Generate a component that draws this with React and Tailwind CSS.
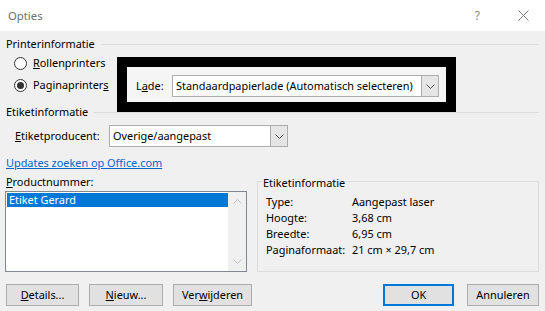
import React from "react";

function Radio({ checked }) {
  return (
    <span className="w-[13px] h-[13px] rounded-full border border-[#333333] bg-white flex items-center justify-center shrink-0">
      {checked && <span className="w-[7px] h-[7px] rounded-full bg-[#333333]" />}
    </span>
  );
}

function Chevron({ up, color = "#555555" }) {
  return (
    <svg width="9" height="5" viewBox="0 0 9 5" fill="none">
      <polyline
        points={up ? "0.5,4.5 4.5,0.5 8.5,4.5" : "0.5,0.5 4.5,4.5 8.5,0.5"}
        stroke={color}
        strokeWidth="1"
      />
    </svg>
  );
}

function Combo({ className, text }) {
  return (
    <div className={"flex h-[22px] border border-[#adadad] bg-white " + className}>
      <div className="flex-1 flex items-center pl-[3px] whitespace-nowrap overflow-hidden">{text}</div>
      <div className="w-[17px] bg-[#e5e5e5] border-l border-[#adadad] flex items-center justify-center">
        <Chevron />
      </div>
    </div>
  );
}

function GroupHeader({ children }) {
  return (
    <div className="flex items-center h-[16px]">
      <span className="whitespace-nowrap">{children}</span>
      <div className="flex-1 h-px bg-[#dcdcdc] ml-[6px]" />
    </div>
  );
}

function Btn({ className, children }) {
  return (
    <div
      className={
        "h-[22px] bg-[#e1e1e1] flex items-center justify-center whitespace-nowrap " + className
      }
    >
      {children}
    </div>
  );
}

export default function App() {
  return (
    <div className="w-[545px] h-[311px] bg-[#f0f0f0] font-['Noto_Sans',sans-serif] text-[10.9px] leading-[16px] text-black overflow-hidden">
      {/* Title bar */}
      <div className="h-[31px] bg-white flex items-center">
        <span className="ml-[8px] text-[11.3px] text-[#6f6f6f]">Opties</span>
        <span className="ml-auto text-[12px] text-[#8a8a8a] mr-[38px]">?</span>
        <svg width="11" height="11" viewBox="0 0 11 11" className="mr-[16px]">
          <line x1="0.5" y1="0.5" x2="10.5" y2="10.5" stroke="#7a7a7a" strokeWidth="1" />
          <line x1="10.5" y1="0.5" x2="0.5" y2="10.5" stroke="#7a7a7a" strokeWidth="1" />
        </svg>
      </div>

      <div className="px-[6px]">
        <div className="mt-[5px]">
          <GroupHeader>Printerinformatie</GroupHeader>
        </div>

        <div className="flex">
          <div className="w-[111px] pl-[8px]">
            <div className="h-[22px] flex items-center gap-[6px]">
              <Radio />
              <span>
                <span className="underline">R</span>ollenprinters
              </span>
            </div>
            <div className="h-[22px] flex items-center gap-[6px]">
              <Radio checked />
              <span>
                Paginaprinter<span className="underline">s</span>
              </span>
            </div>
          </div>
          <div className="relative z-10 mt-[5px] h-[55px] w-[339px] border-[10px] border-black bg-[#f5f5f5] flex items-start pt-[8px] pl-[9px]">
            <span className="h-[22px] leading-[22px] w-[36px] shrink-0">
              L<span className="underline">a</span>de:
            </span>
            <Combo className="w-[267px]" text="Standaardpapierlade (Automatisch selecteren)" />
          </div>
        </div>

        <div className="-mt-[8px]">
          <GroupHeader>Etiketinformatie</GroupHeader>
        </div>

        <div className="mt-[5px] flex items-center">
          <span className="pl-[9px] w-[103px] shrink-0">
            <span className="underline">E</span>tiketproducent:
          </span>
          <Combo className="w-[179px]" text="Overige/aangepast" />
        </div>

        <div className="mt-[8px] h-[16px] flex items-center">
          <span className="text-[#0066cc] underline">Updates zoeken op Office.com</span>
        </div>

        <div className="flex">
          <div className="w-[246px] shrink-0">
            <div className="mt-[3px] h-[16px]">
              <span className="underline">P</span>roductnummer:
            </div>
            <div className="-ml-px mt-[1px] w-[242px] h-[81px] border border-[#828790] bg-white flex">
              <div className="flex-1 pl-px pt-px">
                <div className="h-[14px] leading-[14px] bg-[#0078d7] text-white pl-[2px]">Etiket Gerard</div>
              </div>
              <div className="w-[18px] bg-[#f0f0f0] flex flex-col items-center justify-between pt-[7px] pb-[7px]">
                <Chevron up color="#c2c2c2" />
                <Chevron color="#c2c2c2" />
              </div>
            </div>
          </div>

          <div className="ml-[5px] mt-[10px] w-[282px] h-[91px] border border-[#dcdcdc]">
            <div className="-mt-[7px] ml-[4px] px-px w-fit h-[16px] bg-[#f0f0f0]">Etiketinformatie</div>
            <div className="mt-[3px] pl-[8px]">
              {[
                ["Type:", "Aangepast laser"],
                ["Hoogte:", "3,68 cm"],
                ["Breedte:", "6,95 cm"],
                ["Paginaformaat:", "21 cm × 29,7 cm"],
              ].map(([k, v]) => (
                <div key={k} className="flex h-[16px] items-center">
                  <span className="w-[86px] shrink-0">{k}</span>
                  <span>{v}</span>
                </div>
              ))}
            </div>
          </div>
        </div>

        <div className="mt-[12px] flex">
          <Btn className="w-[73px] border border-[#adadad]">
            <span>
              <span className="underline">D</span>etails...
            </span>
          </Btn>
          <Btn className="w-[74px] ml-[10px] border border-[#adadad]">
            <span>
              <span className="underline">N</span>ieuw...
            </span>
          </Btn>
          <Btn className="w-[79px] ml-[10px] border border-[#adadad]">
            <span>
              Ver<span className="underline">w</span>ijderen
            </span>
          </Btn>
          <Btn className="w-[71px] ml-auto border-2 border-[#0078d7]">OK</Btn>
          <Btn className="w-[72px] ml-[13px] border border-[#adadad]">Annuleren</Btn>
        </div>
      </div>
    </div>
  );
}
